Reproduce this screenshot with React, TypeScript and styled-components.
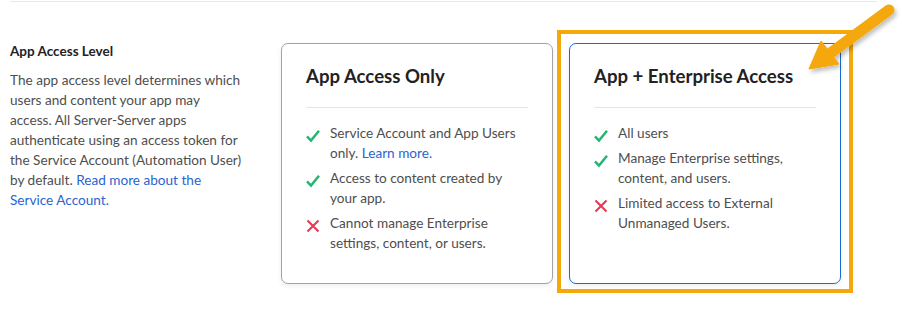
import React from "react";
import styled, { createGlobalStyle } from "styled-components";

const GlobalStyle = createGlobalStyle`
  html, body { margin: 0; padding: 0; background: #ffffff; }
  body { font-family: Lato, "Open Sans", sans-serif; -webkit-font-smoothing: antialiased; }
`;

const Page = styled.div`
  position: relative;
  width: 902px;
  height: 317px;
  overflow: hidden;
`;

const Section = styled.section`
  margin: 1px 0 0 10px;
  width: 867px;
  border-top: 1px solid #e8e8e8;
  padding-top: 41px;
  display: flex;
  align-items: flex-start;
`;

const Intro = styled.div`
  width: 234px;
  margin-right: 37px;
`;

const IntroTitle = styled.h3`
  margin: 0;
  font-size: 13.5px;
  line-height: 16px;
  font-weight: 700;
  color: #222222;
`;

const IntroText = styled.p`
  margin: 11px 0 0;
  font-size: 13.6px;
  line-height: 20px;
  color: #4e4e4e;
`;

const Link = styled.a`
  color: #2a64cf;
  text-decoration: none;
`;

const Cards = styled.div`
  display: flex;
  gap: 16px;
`;

const CardSlot = styled.div`
  position: relative;
`;

const Card = styled.div<{ $selected?: boolean }>`
  box-sizing: border-box;
  width: 272px;
  height: 241px;
  padding: 20px 24px;
  border: 1px solid ${(p) => (p.$selected ? "#1a6ad4" : "#a3a3a3")};
  border-radius: 7px;
  background: #ffffff;
  box-shadow: 0 2px 5px rgba(0, 0, 0, 0.07);
`;

const CardTitle = styled.h2`
  margin: 0;
  font-size: 18.6px;
  line-height: 24px;
  font-weight: 700;
  color: #222222;
`;

const Divider = styled.hr`
  margin: 19px 0 15px;
  border: none;
  border-top: 1px solid #e5e5e5;
  height: 0;
`;

const List = styled.ul`
  list-style: none;
  margin: 0;
  padding: 0;
  display: flex;
  flex-direction: column;
  gap: 5px;
`;

const Item = styled.li`
  display: flex;
  align-items: flex-start;
  gap: 10px;
  font-size: 13.6px;
  line-height: 20px;
  color: #4e4e4e;
`;

const IconBox = styled.span`
  flex: none;
  width: 14px;
  height: 14px;
  margin-top: 6px;
  display: flex;
`;

const Highlight = styled.div`
  position: absolute;
  left: -12px;
  top: -13px;
  right: -12px;
  bottom: -9px;
  border: 4px solid #f5a80a;
  pointer-events: none;
`;

const ArrowSvg = styled.svg`
  position: absolute;
  left: 790px;
  top: 0;
  overflow: visible;
  pointer-events: none;
`;

const Check = () => (
  <IconBox>
    <svg width="14" height="14" viewBox="0 0 14 14">
      <path d="M1 7.4 L5 11.6 L13 1.8" fill="none" stroke="#27b573" strokeWidth="2.5" strokeLinecap="butt" strokeLinejoin="miter" />
    </svg>
  </IconBox>
);

const Cross = () => (
  <IconBox>
    <svg width="14" height="14" viewBox="0 0 14 14">
      <path d="M1.5 1.5 L12.5 12.5 M12.5 1.5 L1.5 12.5" fill="none" stroke="#e43a52" strokeWidth="2.1" />
    </svg>
  </IconBox>
);

export default function App() {
  return (
    <Page>
      <GlobalStyle />
      <Section>
        <Intro>
          <IntroTitle>App Access Level</IntroTitle>
          <IntroText>
            The app access level determines which users and content your app may access. All
            Server-Server apps authenticate using an access token for the Service Account
            (Automation User) by default. <Link href="#">Read more about the Service Account.</Link>
          </IntroText>
        </Intro>
        <Cards>
          <CardSlot>
            <Card>
              <CardTitle>App Access Only</CardTitle>
              <Divider />
              <List>
                <Item>
                  <Check />
                  <span>
                    Service Account and App Users only. <Link href="#">Learn more.</Link>
                  </span>
                </Item>
                <Item>
                  <Check />
                  <span>Access to content created by your app.</span>
                </Item>
                <Item>
                  <Cross />
                  <span>Cannot manage Enterprise settings, content, or users.</span>
                </Item>
              </List>
            </Card>
          </CardSlot>
          <CardSlot>
            <Card $selected>
              <CardTitle>App + Enterprise Access</CardTitle>
              <Divider />
              <List>
                <Item>
                  <Check />
                  <span>All users</span>
                </Item>
                <Item>
                  <Check />
                  <span>Manage Enterprise settings, content, and users.</span>
                </Item>
                <Item>
                  <Cross />
                  <span>Limited access to External Unmanaged Users.</span>
                </Item>
              </List>
            </Card>
            <Highlight />
          </CardSlot>
        </Cards>
      </Section>
      <ArrowSvg width="112" height="80" viewBox="790 0 112 80">
        <defs>
          <filter id="arrowShadow" x="-20%" y="-20%" width="140%" height="140%">
            <feDropShadow dx="2" dy="3" stdDeviation="2" floodColor="#000000" floodOpacity="0.25" />
          </filter>
        </defs>
        <g filter="url(#arrowShadow)" fill="#f5a80a" stroke="#f5a80a">
          <line x1="889" y1="10" x2="828" y2="55" strokeWidth="11" strokeLinecap="round" />
          <polygon points="809,69 821,41 839,64" strokeWidth="1" strokeLinejoin="round" />
        </g>
      </ArrowSvg>
    </Page>
  );
}
